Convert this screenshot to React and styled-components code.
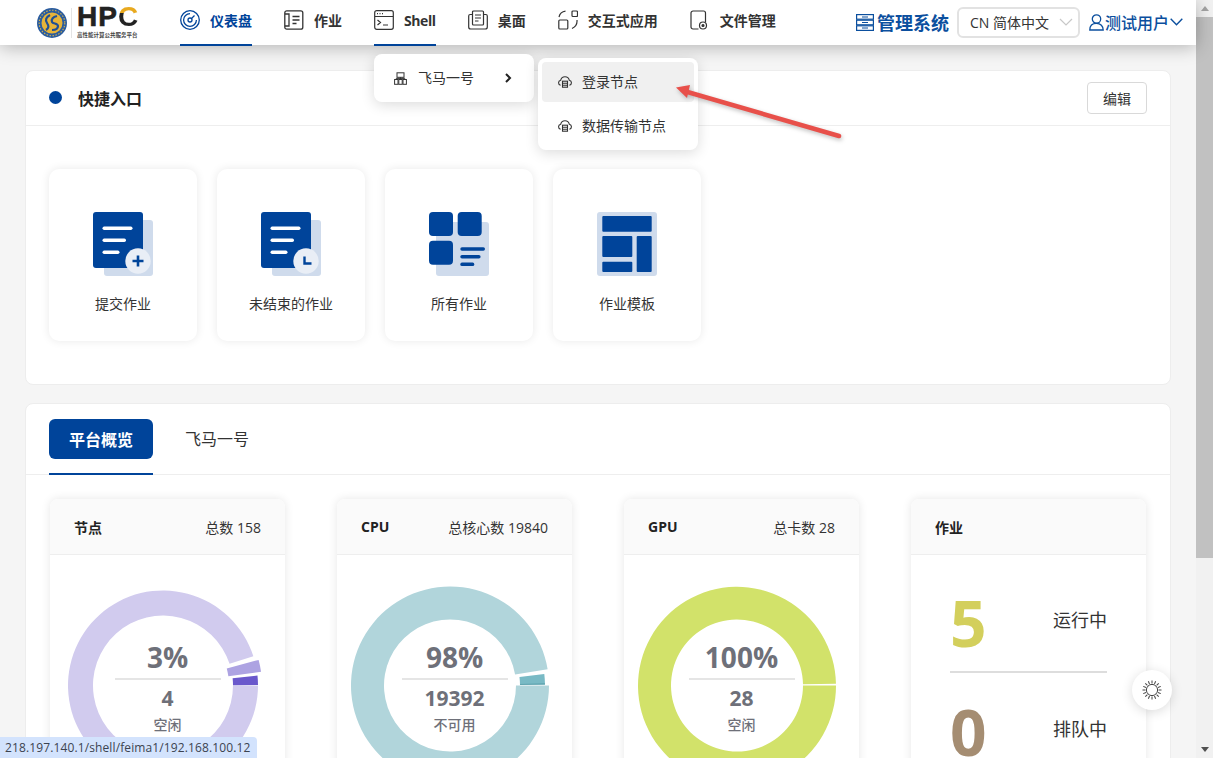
import styled, { createGlobalStyle } from "styled-components";

const BLUE = "#00449a";

const navItems = [
    { label: "仪表盘", Icon: DashboardIcon, active: true, underline: true },
    { label: "作业", Icon: JobIcon },
    { label: "Shell", Icon: ShellIcon, underline: true, tight: true },
    { label: "桌面", Icon: DesktopIcon },
    { label: "交互式应用", Icon: AppsIcon },
    { label: "文件管理", Icon: FileIcon },
];

const tiles = [
    { label: "提交作业", Icon: SubmitTileIcon },
    { label: "未结束的作业", Icon: PendingTileIcon },
    { label: "所有作业", Icon: AllTileIcon },
    { label: "作业模板", Icon: TemplateTileIcon },
];

const charts = [
    {
        title: "节点", total: "总数 158", percent: "3%", count: "4", caption: "空闲", cx: 113,
        slices: [
            { r0: 70, r1: 95, from: 18, to: 360, fill: "#d1cbee" },
            { r0: 66, r1: 99, from: 8, to: 15, fill: "#ada3e2" },
            { r0: 70, r1: 95, from: 0.3, to: 6, fill: "#6a58cc" },
        ],
    },
    {
        title: "CPU", total: "总核心数 19840", percent: "98%", count: "19392", caption: "不可用", cx: 113,
        slices: [
            { r0: 66, r1: 99, from: 9.5, to: 360, fill: "#b1d5db" },
            { r0: 70, r1: 95, from: 0.6, to: 7, fill: "#79bac5" },
            { r0: 70, r1: 95, from: 0.6, to: 1.2, fill: "#4f98a4" },
        ],
    },
    {
        title: "GPU", total: "总卡数 28", percent: "100%", count: "28", caption: "空闲", cx: 113,
        slices: [{ r0: 66, r1: 99, from: 1, to: 360, fill: "#d2e26a" }],
    },
];

function slicePath({ r0, r1, from, to }, cx, cy) {
    // angles run anticlockwise from 3 o'clock, as the chart on the page does
    const point = (r, deg) => {
        const rad = (deg * Math.PI) / 180;
        return `${(cx + r * Math.cos(rad)).toFixed(2)} ${(cy - r * Math.sin(rad)).toFixed(2)}`;
    };
    const large = to - from > 180 ? 1 : 0;
    return `M${point(r1, from)} A${r1} ${r1} 0 ${large} 0 ${point(r1, to)} L${point(r0, to)} A${r0} ${r0} 0 ${large} 1 ${point(r0, from)} Z`;
}

function App() {
    return (
        <>
            <StGlobal />
            <StViewport>
                <StPage>
                    <StHeader>
                        <StLogo>
                            <LogoMark />
                            <StLogoRule />
                            <StLogoText>
                                <StLogoName>HP<StLogoC>C</StLogoC></StLogoName>
                                <StLogoSub>高性能计算公共服务平台</StLogoSub>
                            </StLogoText>
                        </StLogo>
                        <StNav>
                            {navItems.map(({ label, Icon, active, underline, tight }) => (
                                <StNavItem key={label} $active={active} $underline={underline} $tight={tight}>
                                    <Icon />
                                    <span>{label}</span>
                                </StNavItem>
                            ))}
                        </StNav>
                        <StHeaderRight>
                            <StAdmin>
                                <ServerStackIcon />
                                管理系统
                            </StAdmin>
                            <StLang>
                                CN 简体中文
                                <svg width="14" height="8" viewBox="0 0 14 8" fill="none" stroke="#c8c8c8" strokeWidth="1.2">
                                    <path d="M1 1l6 6 6-6" />
                                </svg>
                            </StLang>
                            <StUser>
                                <svg width="15" height="17" viewBox="0 0 15 17" fill="none" stroke="#0b4f9e" strokeWidth="1.3">
                                    <circle cx="7.5" cy="5" r="4.2" />
                                    <path d="M.8 16c0-4 2.6-6.6 6.7-6.6s6.7 2.6 6.7 6.6z" />
                                </svg>
                                测试用户
                                <svg width="13" height="8" viewBox="0 0 13 8" fill="none" stroke="#0b4f9e" strokeWidth="1.4">
                                    <path d="M.7.8l5.8 6 5.8-6" />
                                </svg>
                            </StUser>
                        </StHeaderRight>
                    </StHeader>

                    <StContent>
                        <StCard>
                            <StCardHead>
                                <StDot />
                                <StCardTitle>快捷入口</StCardTitle>
                                <StEditButton>编辑</StEditButton>
                            </StCardHead>
                            <StTiles>
                                {tiles.map(({ label, Icon }) => (
                                    <StTile key={label}>
                                        <Icon />
                                        <StTileLabel>{label}</StTileLabel>
                                    </StTile>
                                ))}
                            </StTiles>
                        </StCard>

                        <StCard>
                            <StTabs>
                                <StTabActive>
                                    <StTabButton>平台概览</StTabButton>
                                </StTabActive>
                                <StTab>飞马一号</StTab>
                            </StTabs>
                            <StStats>
                                {charts.map((chart) => (
                                    <StStat key={chart.title}>
                                        <StStatHead>
                                            <StStatTitle>{chart.title}</StStatTitle>
                                            <span>{chart.total}</span>
                                        </StStatHead>
                                        <StChart>
                                            <svg width="235" height="260" viewBox="0 0 235 260">
                                                {chart.slices.map((slice, index) => (
                                                    <path key={index} d={slicePath(slice, chart.cx, 130.5)} fill={slice.fill} />
                                                ))}
                                            </svg>
                                            <StChartLabel>
                                                <StPercent>{chart.percent}</StPercent>
                                                <StChartRule />
                                                <StCount>{chart.count}</StCount>
                                                <StCaption>{chart.caption}</StCaption>
                                            </StChartLabel>
                                        </StChart>
                                    </StStat>
                                ))}
                                <StStat>
                                    <StStatHead>
                                        <StStatTitle>作业</StStatTitle>
                                    </StStatHead>
                                    <StJobList>
                                        <StJobRow $divided>
                                            <StJobNumber $color="#d3cf5c">5</StJobNumber>
                                            <StJobLabel>运行中</StJobLabel>
                                        </StJobRow>
                                        <StJobRow>
                                            <StJobNumber $color="#a58d72">0</StJobNumber>
                                            <StJobLabel>排队中</StJobLabel>
                                        </StJobRow>
                                    </StJobList>
                                </StStat>
                            </StStats>
                        </StCard>
                    </StContent>
                </StPage>

                <StScrollbar>
                    <StScrollArrow $up />
                    <StScrollTrack>
                        <StScrollThumb />
                    </StScrollTrack>
                    <StScrollArrow />
                </StScrollbar>

                <StClusterMenu>
                    <ClusterIcon />
                    <StClusterName>飞马一号</StClusterName>
                    <svg width="7" height="10" viewBox="0 0 7 10" fill="none" stroke="#222" strokeWidth="2">
                        <path d="M1 1l4 4-4 4" />
                    </svg>
                </StClusterMenu>
                <StNodeMenu>
                    <StNodeItem $hover>
                        <CloudBoxIcon />
                        <span>登录节点</span>
                    </StNodeItem>
                    <StNodeItem>
                        <CloudBoxIcon />
                        <span>数据传输节点</span>
                    </StNodeItem>
                </StNodeMenu>
                <StArrow width="175" height="65" viewBox="0 0 175 65">
                    <path d="M169 56L14 11" stroke="#e8504a" strokeWidth="4.5" strokeLinecap="round" fill="none" />
                    <path d="M6 7.5L20 5 17 18z" fill="#e8504a" />
                </StArrow>

                <StFloat>
                    <SunIcon />
                </StFloat>
                <StStatusBar>218.197.140.1/shell/feima1/192.168.100.12</StStatusBar>
            </StViewport>
        </>
    );
}

export default App;

function LogoMark() {
    return (
        <svg width="30" height="30" viewBox="0 0 30 30">
            <circle cx="15" cy="15" r="15" fill="#2a5c9f" />
            <circle cx="15" cy="15" r="12.8" fill="none" stroke="#d9b44a" strokeWidth="1.1" strokeDasharray="1.5 1.5" />
            <circle cx="15" cy="15" r="10.5" fill="#e6b43a" />
            <path d="M13 7c-4 2-5 5-3 8s2 5-1 7M20 8c-4 1-6 3-5 6 1 2 6 1 6 4s-3 4-6 4" fill="none" stroke="#1f4f94" strokeWidth="2.2" />
        </svg>
    );
}

function DashboardIcon() {
    return (
        <svg width="20" height="20" viewBox="0 0 20 20" fill="none" stroke={BLUE} strokeWidth="1.3">
            <circle cx="10" cy="10" r="9.3" />
            <path d="M10 3.6A6.4 6.4 0 1 0 16.4 10" />
            <circle cx="10" cy="10" r="2" />
            <path d="M11.5 8.5l3-3" />
        </svg>
    );
}

function JobIcon() {
    return (
        <svg width="20" height="20" viewBox="0 0 20 20" fill="none" stroke="#333" strokeWidth="1.3">
            <rect x=".8" y=".8" width="18" height="18.4" rx="2" />
            <path d="M1 4h4v12H1M8.5 6.5h7M8.5 10h7M8.5 13.5h4" />
        </svg>
    );
}

function ShellIcon() {
    return (
        <svg width="20" height="20" viewBox="0 0 20 20" fill="none" stroke="#333" strokeWidth="1.2">
            <rect x=".7" y=".7" width="18.6" height="18.6" rx="2" />
            <path d="M1 6.5h18M3 3.6h1M5.5 3.6h1M8 3.6h1M3.5 10l3 2.5-3 2.5M9 15h5" />
        </svg>
    );
}

function DesktopIcon() {
    return (
        <svg width="20" height="20" viewBox="0 0 20 20" fill="none" stroke="#333" strokeWidth="1.2">
            <path d="M4.3 4.5H2.2A1.5 1.5 0 0 0 .7 6v11a2 2 0 0 0 2 2h14.6a2 2 0 0 0 2-2V6a1.5 1.5 0 0 0-1.5-1.5h-2.1" />
            <rect x="4.5" y="1" width="11" height="14" rx="1" />
            <path d="M7 5h6M7 8h6M7 11h3.5" />
        </svg>
    );
}

function AppsIcon() {
    return (
        <svg width="20" height="20" viewBox="0 0 20 20" fill="none" stroke="#333" strokeWidth="1.2">
            <rect x=".8" y="10" width="9" height="9" rx="1" />
            <rect x="14" y="1" width="5.5" height="5.5" rx="1" />
            <path d="M1 7a7.5 7.5 0 0 1 6.5-5.8M19 10a8.5 8.5 0 0 1-5 8.5" />
        </svg>
    );
}

function FileIcon() {
    return (
        <svg width="20" height="20" viewBox="0 0 20 20" fill="none" stroke="#333" strokeWidth="1.2">
            <path d="M8.5 19H3a2 2 0 0 1-2-2V3a2 2 0 0 1 2-2h10.5a2 2 0 0 1 2 2v9" />
            <circle cx="13" cy="15.5" r="3.5" />
            <circle cx="13" cy="15.5" r="1" fill="#333" />
        </svg>
    );
}

function ServerStackIcon() {
    return (
        <svg width="18" height="17" viewBox="0 0 18 17" fill="none" stroke="#0b4f9e" strokeWidth="1.2">
            <rect x=".6" y=".6" width="16.8" height="4.6" />
            <rect x=".6" y="6.2" width="16.8" height="4.6" />
            <rect x=".6" y="11.8" width="16.8" height="4.6" />
            <path d="M6 3h6M6 8.5h6M6 14h6" />
        </svg>
    );
}

function ClusterIcon() {
    return (
        <svg width="13" height="13" viewBox="0 0 13 13" fill="none" stroke="#333" strokeWidth="1">
            <rect x="3" y=".8" width="7" height="4.5" />
            <rect x=".6" y="7.5" width="3.4" height="4.8" />
            <rect x="4.8" y="7.5" width="3.4" height="4.8" />
            <rect x="9" y="7.5" width="3.4" height="4.8" />
            <path d="M6.5 5.3v2.2M2.3 7.5V6.4h8.4v1.1" />
        </svg>
    );
}

function CloudBoxIcon() {
    return (
        <svg width="14" height="12" viewBox="0 0 14 12" fill="none" stroke="#333" strokeWidth="1.1">
            <path d="M2.6 9.3A2.6 2.6 0 0 1 2.7 4.2 4.4 4.4 0 0 1 11.3 4.2 2.6 2.6 0 0 1 11.4 9.3" />
            <rect x="4.5" y="5.2" width="5" height="6" />
            <path d="M4.5 7.2h5M4.5 9.2h5" />
        </svg>
    );
}

function SubmitTileIcon() {
    return (
        <DocIcon>
            <path d="M45 43.5v11M39.5 49h11" stroke={BLUE} strokeWidth="2.6" fill="none" />
        </DocIcon>
    );
}

function PendingTileIcon() {
    return (
        <DocIcon>
            <path d="M43.5 44.5v7h7" stroke={BLUE} strokeWidth="2.4" fill="none" />
        </DocIcon>
    );
}

function DocIcon({ children }) {
    return (
        <svg width="60" height="64" viewBox="0 0 60 64">
            <rect x="11" y="8" width="49" height="56" rx="3" fill="#cfdbec" />
            <rect width="50" height="56" rx="3" fill={BLUE} />
            <rect x="9.5" y="14.5" width="30" height="3.5" rx="1.7" fill="#fff" />
            <rect x="9.5" y="26.5" width="23.5" height="3.5" rx="1.7" fill="#fff" />
            <rect x="9.5" y="38.5" width="17" height="3.5" rx="1.7" fill="#fff" />
            <circle cx="45" cy="49" r="12.7" fill="#e9eef6" />
            {children}
        </svg>
    );
}

function AllTileIcon() {
    return (
        <svg width="60" height="64" viewBox="0 0 60 64">
            <rect x="7" y="10" width="53" height="54" rx="3" fill="#cfdbec" />
            <rect width="24" height="24" rx="4" fill={BLUE} />
            <rect x="28.7" width="24" height="24" rx="4" fill={BLUE} />
            <rect y="28.7" width="24" height="24" rx="4" fill={BLUE} />
            <rect x="31.3" y="35.3" width="24.7" height="3.5" rx="1.7" fill={BLUE} />
            <rect x="31.3" y="43" width="20.3" height="3.5" rx="1.7" fill={BLUE} />
            <rect x="31.3" y="50.6" width="14" height="3.5" rx="1.7" fill={BLUE} />
        </svg>
    );
}

function TemplateTileIcon() {
    return (
        <svg width="60" height="64" viewBox="0 0 60 64">
            <rect width="60" height="64" rx="3" fill="#cfdbec" />
            <rect x="5.3" y="4" width="49.4" height="15.7" rx="1" fill={BLUE} />
            <rect x="5.3" y="24" width="30" height="21" rx="1" fill={BLUE} />
            <rect x="39.7" y="24" width="15" height="36" rx="1" fill={BLUE} />
            <rect x="5.3" y="49.7" width="30" height="10.3" rx="1" fill={BLUE} />
        </svg>
    );
}

function SunIcon() {
    const rays = Array.from({ length: 16 }, (_, index) => index * 22.5);
    return (
        <svg width="20" height="20" viewBox="0 0 20 20" fill="none" stroke="#444" strokeWidth="1">
            <circle cx="10" cy="10" r="5.6" />
            {rays.map((deg) => (
                <path key={deg} d="M10 .5v3" transform={`rotate(${deg} 10 10)`} />
            ))}
        </svg>
    );
}

const StGlobal = createGlobalStyle`
    html, body {
        margin: 0;
        padding: 0;
        height: 100%;
        overflow: hidden;
    }
    body {
        font-family: "Open Sans", "Noto Sans CJK SC", sans-serif;
        color: #333;
    }
    * {
        box-sizing: border-box;
    }
`
const StViewport = styled.div`
    position: relative;
    display: flex;
    width: 1213px;
    height: 758px;
    overflow: hidden;
    background: #f5f5f5;
`
const StPage = styled.div`
    flex: 1;
    min-width: 0;
`
const StHeader = styled.header`
    position: relative;
    z-index: 1;
    display: flex;
    align-items: center;
    height: 45px;
    padding: 0 13px 0 37px;
    background: #fff;
    box-shadow: 0 2px 18px rgba(0, 0, 0, 0.28);
`
const StLogo = styled.div`
    display: flex;
    align-items: center;
    width: 143px;
    height: 100%;
`
const StLogoRule = styled.div`
    width: 1px;
    height: 30px;
    margin: 0 5px 0 4px;
    background: #e4e4e4;
`
const StLogoText = styled.div`
    display: flex;
    flex-direction: column;
    margin-bottom: 3px;
`
const StLogoName = styled.div`
    font-family: "Liberation Sans", sans-serif;
    font-size: 28px;
    font-weight: 700;
    line-height: 28px;
    letter-spacing: 1px;
    color: #222;
    -webkit-text-stroke: 0.6px #222;
`
const StLogoC = styled.span`
    background: linear-gradient(to bottom, #e8a91f 38%, #222 38%);
    -webkit-background-clip: text;
    background-clip: text;
    color: transparent;
    -webkit-text-stroke: 0;
`
const StLogoSub = styled.div`
    font-size: 5.5px;
    line-height: 8px;
    font-weight: 700;
    color: #444;
    white-space: nowrap;
`
const StNav = styled.nav`
    display: flex;
    gap: 32px;
    height: 100%;
`
const StNavItem = styled.div`
    display: flex;
    align-items: center;
    gap: 10px;
    height: 46px;
    padding-bottom: 4px;
    font-size: 14px;
    font-weight: 700;
    letter-spacing: ${(props) => (props.$tight ? "-0.4px" : "0")};
    color: ${(props) => (props.$active ? "#00449a" : "#333")};
    border-bottom: 2px solid ${(props) => (props.$underline ? "#00449a" : "transparent")};
`
const StHeaderRight = styled.div`
    display: flex;
    align-items: center;
    margin-left: auto;
    margin-top: -1px;
`
const StAdmin = styled.div`
    display: flex;
    align-items: center;
    gap: 3px;
    font-size: 18px;
    font-weight: 700;
    color: #0b4f9e;
`
const StLang = styled.div`
    display: flex;
    align-items: center;
    justify-content: space-between;
    width: 123px;
    height: 31px;
    margin: 0 9px 0 8px;
    padding: 0 5px 0 11px;
    font-size: 14px;
    color: #333;
    border: 2px solid #e2e2e2;
    border-radius: 6px;
`
const StUser = styled.div`
    display: flex;
    align-items: center;
    gap: 1px;
    font-size: 16px;
    font-weight: 500;
    color: #0b4f9e;
`
const StContent = styled.main`
    display: flex;
    flex-direction: column;
    gap: 18px;
    padding: 25px 25px 0;
`
const StCard = styled.section`
    background: #fff;
    border: 1px solid #ededed;
    border-radius: 8px;
`
const StCardHead = styled.div`
    display: flex;
    align-items: center;
    height: 55px;
    padding: 0 23px 1px;
    border-bottom: 1px solid #eee;
`
const StDot = styled.span`
    width: 13px;
    height: 13px;
    margin-right: 16px;
    border-radius: 50%;
    background: #00449a;
`
const StCardTitle = styled.h2`
    margin: 0;
    font-size: 16px;
    font-weight: 700;
    color: #222;
`
const StEditButton = styled.button`
    width: 60px;
    height: 32px;
    margin-left: auto;
    font-family: inherit;
    font-size: 14px;
    color: #333;
    background: #fff;
    border: 1px solid #d9d9d9;
    border-radius: 4px;
`
const StTiles = styled.div`
    display: flex;
    gap: 20px;
    padding: 43px 23px;
`
const StTile = styled.div`
    display: flex;
    flex-direction: column;
    align-items: center;
    width: 148px;
    height: 172px;
    padding-top: 43px;
    border-radius: 10px;
    background: #fff;
    box-shadow: 0 0 10px rgba(0, 0, 0, 0.09);
`
const StTileLabel = styled.div`
    margin-top: 17px;
    font-size: 14px;
    line-height: 22px;
    color: #333;
`
const StTabs = styled.div`
    display: flex;
    gap: 32px;
    height: 71px;
    padding: 15px 23px 0;
    border-bottom: 1px solid #eee;
`
const StTabActive = styled.div`
    width: 104px;
    height: 56px;
    border-bottom: 2px solid #00449a;
`
const StTabButton = styled.div`
    display: flex;
    align-items: center;
    justify-content: center;
    height: 40px;
    font-size: 16px;
    font-weight: 700;
    color: #fff;
    background: #00449a;
    border-radius: 6px;
`
const StTab = styled.div`
    height: 40px;
    font-size: 16px;
    line-height: 40px;
    color: #333;
`
const StStats = styled.div`
    display: grid;
    grid-template-columns: repeat(4, 235px);
    column-gap: 52px;
    padding: 24px 24px 0;
`
const StStat = styled.div`
    height: 360px;
    border-radius: 8px;
    background: #fff;
    box-shadow: 0 0 10px rgba(0, 0, 0, 0.1);
    overflow: hidden;
`
const StStatHead = styled.div`
    display: flex;
    align-items: center;
    justify-content: space-between;
    height: 56px;
    padding: 0 24px;
    font-size: 14px;
    color: #333;
    background: #fafafa;
    border-bottom: 1px solid #eee;
`
const StStatTitle = styled.span`
    font-weight: 700;
    color: #222;
`
const StChart = styled.div`
    position: relative;
    height: 304px;
    svg {
        display: block;
    }
`
const StChartLabel = styled.div`
    position: absolute;
    top: 87px;
    left: 0;
    right: 0;
    display: flex;
    flex-direction: column;
    align-items: center;
    color: #6e7079;
`
const StPercent = styled.div`
    font-size: 28px;
    font-weight: 700;
    line-height: 30px;
`
const StChartRule = styled.div`
    width: 106px;
    height: 2px;
    margin-top: 6px;
    background: #e5e5e5;
`
const StCount = styled.div`
    margin-top: 4px;
    font-size: 21px;
    font-weight: 700;
    line-height: 28px;
`
const StCaption = styled.div`
    margin-top: 3px;
    font-size: 14px;
    font-weight: 500;
    line-height: 20px;
`
const StJobList = styled.div`
    padding: 10px 39px 0;
`
const StJobRow = styled.div`
    display: flex;
    align-items: center;
    justify-content: space-between;
    height: 108px;
    border-bottom: ${(props) => (props.$divided ? "2px solid #ddd" : "none")};
`
const StJobNumber = styled.span`
    margin-top: 10px;
    font-size: 64px;
    font-weight: 700;
    line-height: 64px;
    color: ${(props) => props.$color};
`
const StJobLabel = styled.span`
    margin-top: 2px;
    font-size: 18px;
    color: #333;
`
const StScrollbar = styled.div`
    display: flex;
    flex-direction: column;
    flex: 0 0 17px;
    background: #f1f1f1;
`
const StScrollArrow = styled.div`
    display: flex;
    align-items: center;
    justify-content: center;
    height: 17px;
    &::before {
        content: "";
        border-left: 4px solid transparent;
        border-right: 4px solid transparent;
        ${(props) => (props.$up ? "border-bottom: 5px solid #a3a3a3;" : "border-top: 5px solid #505050;")}
    }
`
const StScrollTrack = styled.div`
    flex: 1;
`
const StScrollThumb = styled.div`
    height: 541px;
    background: #c1c1c1;
`
const StClusterMenu = styled.div`
    position: absolute;
    z-index: 2;
    top: 54px;
    left: 374px;
    display: flex;
    align-items: center;
    width: 160px;
    height: 48px;
    padding: 0 22px 0 20px;
    font-size: 14px;
    color: #333;
    background: #fff;
    border-radius: 8px;
    box-shadow: 0 3px 14px rgba(0, 0, 0, 0.14);
`
const StClusterName = styled.span`
    flex: 1;
    margin-left: 11px;
    padding-bottom: 2px;
`
const StNodeMenu = styled.div`
    position: absolute;
    z-index: 2;
    top: 58px;
    left: 538px;
    display: flex;
    flex-direction: column;
    gap: 4px;
    width: 160px;
    padding: 4px;
    background: #fff;
    border-radius: 8px;
    box-shadow: 0 3px 14px rgba(0, 0, 0, 0.14);
`
const StNodeItem = styled.div`
    display: flex;
    align-items: center;
    gap: 10px;
    height: 40px;
    padding-left: 16px;
    font-size: 14px;
    color: #333;
    background: ${(props) => (props.$hover ? "#f0f0f0" : "transparent")};
    border-radius: 4px;
    span {
        padding-bottom: 2px;
    }
`
const StArrow = styled.svg`
    position: absolute;
    z-index: 3;
    top: 80px;
    left: 670px;
    filter: drop-shadow(1px 2px 2px rgba(0, 0, 0, 0.25));
`
const StFloat = styled.div`
    position: absolute;
    z-index: 2;
    top: 670px;
    left: 1132px;
    display: flex;
    align-items: center;
    justify-content: center;
    width: 40px;
    height: 40px;
    border-radius: 50%;
    background: #fff;
    box-shadow: 0 2px 12px rgba(0, 0, 0, 0.14);
`
const StStatusBar = styled.div`
    position: absolute;
    z-index: 4;
    left: 0;
    bottom: 0;
    height: 21px;
    padding: 0 7px 0 5px;
    font-family: "Open Sans", sans-serif;
    font-size: 12px;
    line-height: 22px;
    letter-spacing: 0.12px;
    color: #3c4350;
    background: #d3e3fd;
    border-top-right-radius: 4px;
`
